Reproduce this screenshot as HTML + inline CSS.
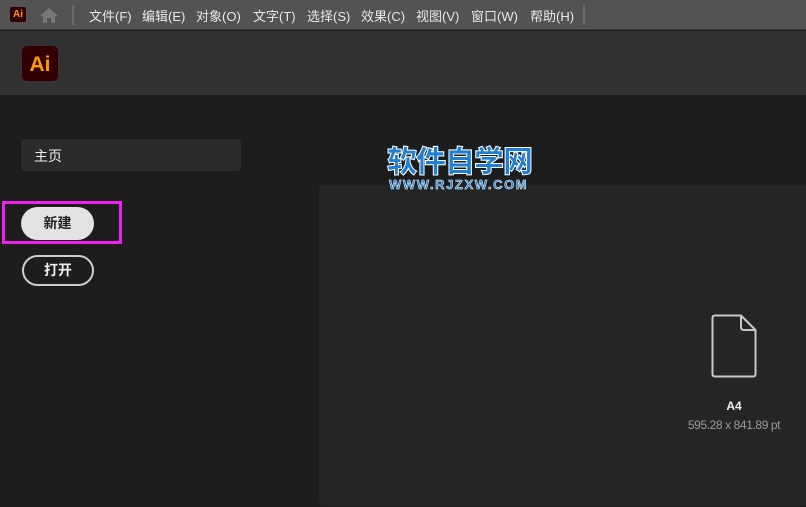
<!DOCTYPE html>
<html><head><meta charset="utf-8"><style>
*{margin:0;padding:0;box-sizing:border-box}
body{width:806px;height:507px;overflow:hidden;background:#1d1d1d;font-family:"Liberation Sans","Noto Sans CJK SC",sans-serif;position:relative}
.menubar{position:absolute;left:0;top:0;width:806px;height:30px;background:#535353;border-bottom:1px solid #3a3a3a}
.m{position:absolute;top:6px;font-size:13px;color:#e8e8e8;white-space:nowrap}
.sep{position:absolute;top:5px;width:2px;height:20px;background:#6a6a6a}
.header{position:absolute;left:0;top:31px;width:806px;height:64px;background:#323232}
.ai{position:absolute;background:#330000;color:#ff9a00;font-weight:bold;display:flex;align-items:center;justify-content:center}
</style></head><body>
<div class="menubar">
<div class="ai" style="left:10px;top:7px;width:16px;height:15px;font-size:10px;border-radius:2px">Ai</div>
<svg style="position:absolute;left:39px;top:7px" width="20" height="17" viewBox="0 0 20 17"><path d="M10 1 L1 9 H4 V16 H8 V11 H12 V16 H16 V9 H19 Z" fill="#777"/></svg>
<div class="sep" style="left:72px"></div>
<div class="m" style="left:89px">文件(F)</div>
<div class="m" style="left:142px">编辑(E)</div>
<div class="m" style="left:196px">对象(O)</div>
<div class="m" style="left:253px">文字(T)</div>
<div class="m" style="left:307px">选择(S)</div>
<div class="m" style="left:361px">效果(C)</div>
<div class="m" style="left:416px">视图(V)</div>
<div class="m" style="left:471px">窗口(W)</div>
<div class="m" style="left:530px">帮助(H)</div>
<div class="sep" style="left:583px"></div>
</div>
<div class="header">
<div class="ai" style="left:22px;top:15px;width:36px;height:35px;font-size:21px;border-radius:5px;padding-top:2px">Ai</div>
</div>
<div style="position:absolute;left:21px;top:139px;width:220px;height:32px;background:#2b2b2b;border-radius:4px;color:#eee;font-size:14px;padding:7px 13px">主页</div>
<div style="position:absolute;left:2px;top:201px;width:120px;height:43px;border:3px solid #ee22ee"></div>
<div style="position:absolute;left:21px;top:207px;width:73px;height:33px;background:#e3e3e3;border-radius:17px;color:#222;font-size:14px;font-weight:bold;text-align:center;line-height:33px">新建</div>
<div style="position:absolute;left:22px;top:255px;width:72px;height:31px;border:2px solid #ccc;border-radius:16px;color:#eee;font-size:14px;font-weight:bold;text-align:center;line-height:27px">打开</div>
<div style="position:absolute;left:319px;top:185px;width:490px;height:321px;background:#252525;border-radius:5px"></div>
<div style="position:absolute;left:387px;top:147px;font-size:30px;font-weight:900;color:#1f7fd0;letter-spacing:-1px;-webkit-text-stroke:1px #fff;line-height:32px">软件自学网</div>
<div style="position:absolute;left:389px;top:178px;font-size:13px;font-weight:bold;color:#1f7fd0;letter-spacing:1.6px;-webkit-text-stroke:0.5px #fff;line-height:13px">WWW.RJZXW.COM</div>
<svg style="position:absolute;left:711px;top:314px" width="46" height="64" viewBox="0 0 46 64"><path d="M30 1.5 H4 Q1.5 1.5 1.5 4 V60 Q1.5 62.5 4 62.5 H42 Q44.5 62.5 44.5 60 V16" fill="none" stroke="#c8c8c8" stroke-width="2"/><path d="M30 1.5 L44.5 16 H33 Q30 16 30 13 Z" fill="none" stroke="#c8c8c8" stroke-width="2" stroke-linejoin="round"/></svg>
<div style="position:absolute;left:680px;top:399px;width:108px;text-align:center;color:#eee;font-size:12px;font-weight:bold">A4</div>
<div style="position:absolute;left:670px;top:418px;width:128px;text-align:center;color:#999;font-size:12px;letter-spacing:-0.4px">595.28 x 841.89 pt</div>
</body></html>
